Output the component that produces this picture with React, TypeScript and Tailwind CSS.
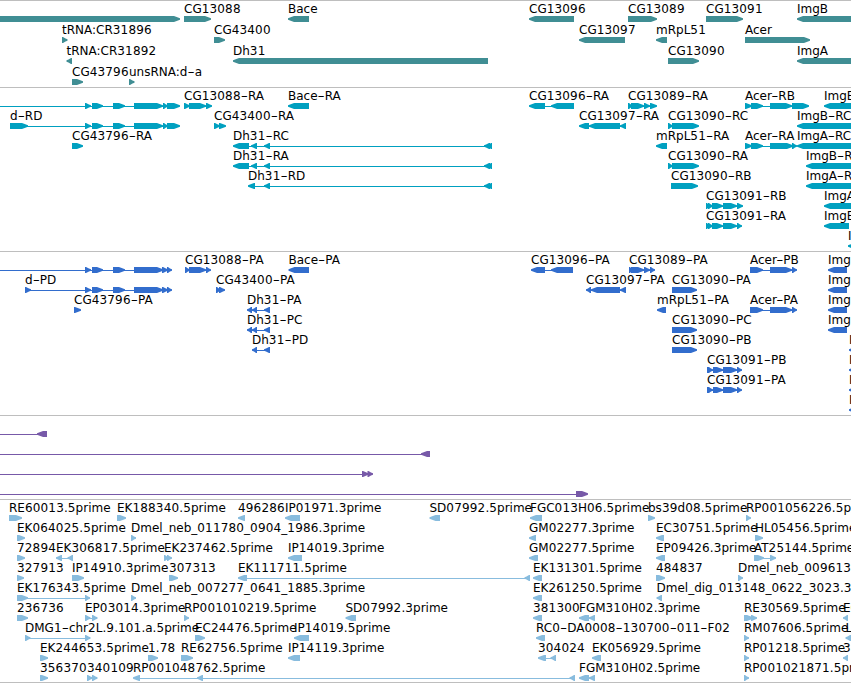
import React from "react";

type Seg = [number, number];
type Feature = { name?: string; x?: number; dir: 1 | -1; segs: Seg[] };
type Track = {
  id: string;
  color: string;
  heightClass: string;
  height: number;
  pitch: number;
  rows: Feature[][];
};

const f = (name: string, dir: 1 | -1, ...segs: Seg[]): Feature => ({ name, dir, segs });
const OFF = -20;
const END = 880;

const genes: Feature[][] = [
  [
    f("", 1, [OFF, 180]),
    f("CG13088", 1, [184, 211]),
    f("Bace", -1, [288, 309]),
    f("CG13096", -1, [529, 574]),
    f("CG13089", 1, [628, 657]),
    f("CG13091", 1, [706, 743]),
    f("ImgB", -1, [797, END]),
  ],
  [
    f("tRNA:CR31896", 1, [62, 67.5]),
    f("CG43400", 1, [214, 225]),
    f("CG13097", -1, [579, 625]),
    f("mRpL51", -1, [656, 667]),
    f("Acer", 1, [745, 810]),
  ],
  [
    f("tRNA:CR31892", -1, [66.5, 72]),
    f("Dh31", -1, [233, 488]),
    f("CG13090", 1, [668, 699]),
    f("ImgA", -1, [797, END]),
  ],
  [f("CG43796", 1, [72, 83]), f("unsRNA:d-a", 1, [129, 134.5])],
];

const dExons: Seg[] = [[85, 91], [92, 103], [113, 125], [134, 163], [163, 168], [167, 180]];
const dh31Tail: Seg[] = [[264, 270], [484, 490], [487, 492]];

const transcripts: Feature[][] = [
  [
    f("", 1, [OFF, OFF + 6], ...dExons),
    f("CG13088-RA", 1, [184, 190], [189, 206], [206, 212]),
    f("Bace-RA", -1, [288, 309]),
    f("CG13096-RA", -1, [529, 545], [551, 574]),
    f("CG13089-RA", 1, [628, 633], [631, 644], [644, 650], [650, 657]),
    f("Acer-RB", 1, [745, 752], [751, 763], [770, 792], [792, 809]),
    f("ImgB-RB", -1, [824, END]),
  ],
  [
    f("d-RD", 1, [10, 28], ...dExons),
    f("CG43400-RA", 1, [214, 220], [219, 226]),
    f("CG13097-RA", -1, [579, 589], [589, 620], [620, 626]),
    f("CG13090-RC", 1, [668, 673], [672, 699]),
    f("ImgB-RC", -1, [797, END]),
  ],
  [
    f("CG43796-RA", 1, [72, 83]),
    f("Dh31-RC", -1, [233, 249], [251, 257], ...dh31Tail),
    f("mRpL51-RA", -1, [656, 667]),
    f("Acer-RA", 1, [745, 752], [751, 763], [770, 793], [792, 797]),
    f("ImgA-RC", -1, [797, END]),
  ],
  [
    f("Dh31-RA", -1, [233, 249], [251, 257], ...dh31Tail),
    f("CG13090-RA", 1, [668, 673], [672, 699]),
    f("ImgB-RA", -1, [806, END]),
  ],
  [
    f("Dh31-RD", -1, [248, 255], ...dh31Tail),
    f("CG13090-RB", 1, [671, 698]),
    f("ImgA-RA", -1, [806, END]),
  ],
  [
    f("CG13091-RB", 1, [706, 710], [708, 713], [712, 723], [723, 737], [737, 743]),
    f("ImgA-RB", -1, [824, END]),
  ],
  [
    f("CG13091-RA", 1, [706, 710], [708, 713], [712, 723], [723, 737], [737, 742]),
    f("ImgB-RD", -1, [824, 849]),
  ],
  [f("ImgA-RD", -1, [848, END])],
];

const dCds: Seg[] = [[85, 91], [92, 103], [113, 125], [134, 163], [162, 168], [167, 172]];
const acerCds: Seg[] = [[750, 763], [770, 792], [792, 797]];

const proteins: Feature[][] = [
  [
    f("", 1, [OFF, OFF + 6], ...dCds),
    f("CG13088-PA", 1, [185, 190], [189, 206], [206, 211]),
    f("Bace-PA", -1, [288.5, 309]),
    f("CG13096-PA", -1, [531, 545], [551, 573]),
    f("CG13089-PA", 1, [629, 633], [631, 644], [644, 650], [650, 655]),
    f("Acer-PB", 1, ...acerCds),
    f("ImgB-PB", -1, [828, 847]),
  ],
  [
    f("d-PD", 1, [25, 31], ...dCds),
    f("CG43400-PA", 1, [216, 221], [219, 225]),
    f("CG13097-PA", -1, [586, 591], [591, 620], [620, 626]),
    f("CG13090-PA", 1, [672, 697]),
    f("ImgB-PC", -1, [828, 847]),
  ],
  [
    f("CG43796-PA", 1, [74, 81]),
    f("Dh31-PA", -1, [247, 252], [252, 257], [264, 270]),
    f("mRpL51-PA", -1, [657, 666]),
    f("Acer-PA", 1, ...acerCds),
    f("ImgB-PA", -1, [828, 847]),
  ],
  [
    f("Dh31-PC", -1, [247, 252], [252, 257], [264, 270]),
    f("CG13090-PC", 1, [672, 697]),
    f("ImgB-PD", -1, [828, 847]),
  ],
  [
    f("Dh31-PD", -1, [252, 257], [264, 270]),
    f("CG13090-PB", 1, [672, 697]),
    f("ImgA-PC", -1, [849, END]),
  ],
  [
    f("CG13091-PB", 1, [707, 711], [708, 713], [713, 723], [723, 737], [737, 742]),
    f("ImgA-PA", -1, [849, END]),
  ],
  [
    f("CG13091-PA", 1, [707, 711], [708, 713], [713, 723], [723, 737], [737, 742]),
    f("ImgA-PB", -1, [849, END]),
  ],
  [f("ImgA-PD", -1, [849, END])],
];

const clones: Feature[][] = [
  [f("", -1, [OFF, OFF + 5], [37, 47])],
  [f("", -1, [OFF, OFF + 5], [421, 430])],
  [f("", 1, [OFF, OFF + 5], [362, 368.5], [367.5, 373])],
  [f("", 1, [OFF, OFF + 5], [576, 588])],
];

const ests: Feature[][] = [
  [
    f("RE60013.5prime", 1, [9, 22]),
    f("EK188340.5prime", 1, [117, 126]),
    f("496286", -1, [238, 245]),
    f("IP01971.3prime", -1, [285, 300]),
    f("SD07992.5prime", -1, [429.5, 440]),
    f("FGC013H06.5prime", -1, [530, 542]),
    f("bs39d08.5prime", 1, [648, 655]),
    f("RP001056226.5prime", 1, [746, 751]),
  ],
  [
    f("EK064025.5prime", 1, [17, 25]),
    f("Dmel_neb_011780_0904_1986.3prime", 1, [131, 136]),
    f("GM02277.3prime", -1, [529, 536]),
    f("EC30751.5prime", -1, [656, 664]),
    f("HL05456.5prime", 1, [755, 763]),
  ],
  [
    f("72894", 1, [17, 25]),
    f("EK306817.5prime", -1, [56, 62], [67.5, 73]),
    f("EK237462.5prime", 1, [164, 169], [167, 172]),
    f("IP14019.3prime", -1, [288, 302]),
    f("GM02277.5prime", -1, [529, 538]),
    f("EP09426.3prime", -1, [656, 665]),
    f("AT25144.5prime", 1, [754, 764], [770, 776]),
  ],
  [
    f("327913", 1, [17, 24]),
    f("IP14910.3prime", 1, [72, 84]),
    f("307313", 1, [169, 178]),
    f("EK111711.5prime", -1, [238, 247], [524.5, 530]),
    f("EK131301.5prime", -1, [533, 542]),
    f("484837", 1, [656, 665]),
    f("Dmel_neb_009613", 1, [738, 743]),
  ],
  [
    f("EK176343.5prime", 1, [17, 28], [85, 90]),
    f("Dmel_neb_007277_0641_1885.3prime", 1, [131, 136]),
    f("EK261250.5prime", -1, [533, 542]),
    f("Dmel_dig_013148_0622_3023.3prime", -1, [656.5, 662]),
  ],
  [
    f("236736", 1, [17, 28]),
    f("EP03014.3prime", 1, [85, 90.5], [92, 97.5]),
    f("RP001010219.5prime", 1, [184, 189]),
    f("SD07992.3prime", -1, [345.5, 356]),
    f("381300", -1, [533, 542]),
    f("FGM310H02.3prime", -1, [579, 589], [589, 595]),
    f("RE30569.5prime", 1, [744, 753], [751, 757]),
    f("EC", -1, [843, 848]),
  ],
  [
    f("DMG1-chr2L.9.101.a.5prime", 1, [25, 30.5], [85, 90.5]),
    f("EC24476.5prime", 1, [195, 205]),
    f("IP14019.5prime", -1, [294, 309]),
    f("RC0-DA0008-130700-011-F02", -1, [536, 545]),
    f("RM07606.5prime", 1, [744, 749]),
    f("LD", -1, [845.5, 851]),
  ],
  [
    f("EK244653.5prime", 1, [40, 48]),
    f("1.78", 1, [148, 158]),
    f("RE62756.5prime", 1, [181, 193]),
    f("IP14119.3prime", -1, [288, 300]),
    f("304024", -1, [538, 546], [550.5, 556]),
    f("EK056929.5prime", -1, [592, 601]),
    f("RP01218.5prime", 1, [744, 749]),
    f("3", -1, [843, 848]),
  ],
  [
    f("356370", 1, [40, 48]),
    f("340109", 1, [87, 92.5], [92, 97.5]),
    f("RP001048762.5prime", -1, [133, 140], [197, 203], [569.5, 575]),
    f("FGM310H02.5prime", -1, [579, 589], [589, 595]),
    f("RP001021871.5prime", 1, [744, 749]),
  ],
];

const tracks: Track[] = [
  { id: "genes", color: "#408e94", heightClass: "h-[87px]", height: 86, pitch: 21, rows: genes },
  { id: "transcripts", color: "#00a0c0", heightClass: "h-[164px]", height: 163, pitch: 20, rows: transcripts },
  { id: "proteins", color: "#326dcd", heightClass: "h-[164px]", height: 163, pitch: 20, rows: proteins },
  { id: "clones", color: "#7759a8", heightClass: "h-[84px]", height: 83, pitch: 20, rows: clones },
  { id: "ests", color: "#88bcde", heightClass: "h-[183px]", height: 182, pitch: 20, rows: ests },
];

// Block arrow, six pixels tall, with a short blunt tip on the strand's side.
function arrow([a, b]: Seg, dir: 1 | -1, y: number) {
  const tip = Math.min(6, b - a - 1);
  const end = dir === 1 ? b : a;
  const tail = dir === 1 ? a : b;
  const shoulder = end - dir * tip;
  const nose = end - dir * Math.min(2, tip / 2);
  return [
    [tail, y],
    [shoulder, y],
    [nose, y + 1.5],
    [end, y + 2.3],
    [end, y + 3.7],
    [nose, y + 4.5],
    [shoulder, y + 6],
    [tail, y + 6],
  ]
    .map((p) => p.join(","))
    .join(" ");
}

function Label({ text, x, y }: { text: string; x: number; y: number }) {
  return (
    <text x={x} y={y} fill="#000" className="whitespace-pre">
      {text.split(/(-|\d+)/).map((part, i) =>
        part === "-" ? (
          <tspan key={i} textLength={7.2} lengthAdjust="spacingAndGlyphs">
            -
          </tspan>
        ) : (
          <tspan key={i} className={/\d/.test(part) ? "tracking-[0.17px]" : undefined}>
            {part}
          </tspan>
        ),
      )}
    </text>
  );
}

function FeatureGlyph({ feature, y }: { feature: Feature; y: number }) {
  const first = feature.segs[0];
  const last = feature.segs[feature.segs.length - 1];
  return (
    <g>
      {feature.segs.length > 1 && (
        <rect x={first[0] + 2} y={y + 18} width={last[1] - first[0] - 4} height={1} />
      )}
      {feature.segs.map((s, i) => (
        <polygon key={i} points={arrow(s, feature.dir, y + 15)} />
      ))}
      {feature.name && <Label text={feature.name} x={first[0]} y={y + 12} />}
    </g>
  );
}

export default function App() {
  return (
    <main className="flex h-[683px] w-[851px] flex-col overflow-hidden border-b border-[#bebebe] bg-white">
      {tracks.map((t) => (
        <section key={t.id} className={`${t.heightClass} shrink-0 overflow-hidden border-t border-[#bebebe]`}>
          <svg
            width={851}
            height={t.height}
            fill={t.color}
            className="block font-['DejaVu_Sans',sans-serif] text-[12px]"
          >
            {t.rows.map((row, r) =>
              row.map((feature, i) => <FeatureGlyph key={`${r}-${i}`} feature={feature} y={r * t.pitch} />),
            )}
          </svg>
        </section>
      ))}
    </main>
  );
}
